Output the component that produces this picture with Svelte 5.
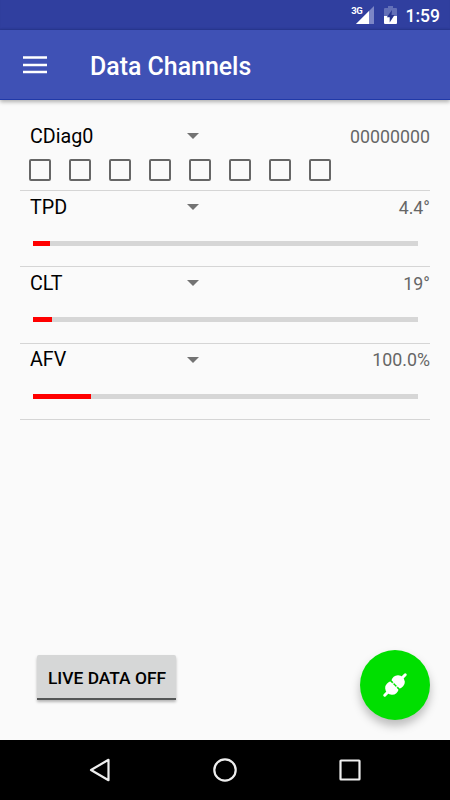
<script>
	const bits = [0, 1, 2, 3, 4, 5, 6, 7];

	const channels = [
		{ name: "CDiag0", value: "00000000", flags: true },
		{ name: "TPD", value: "4.4°", level: 4.6 },
		{ name: "CLT", value: "19°", level: 5.1 },
		{ name: "AFV", value: "100.0%", level: 15.3 },
	];
</script>

<div class="screen">
	<div class="status">
		<span class="network">3G</span>
		<svg class="signal" width="18" height="18" viewBox="0 0 18 18">
			<path d="M0 18 18 0V18Z" fill="#7c86c6" />
			<path d="M0 18 13 5V18Z" fill="#fff" />
		</svg>
		<svg class="battery" width="13" height="18" viewBox="0 0 13 18">
			<path d="M4 0H9V2H12Q13 2 13 3V10H0V3Q0 2 1 2H4Z" fill="#6370b8" />
			<path d="M0 10H13V17Q13 18 12 18H1Q0 18 0 17Z" fill="#fff" />
			<path d="M8 4 2.800 11.200H5.700V16.500L10.500 9H7.500Z" fill="#26348f" />
		</svg>
		<span class="clock">1:59</span>
	</div>

	<header>
		<svg width="24" height="18" viewBox="0 0 24 18">
			<path d="M0 1.600H24M0 8.900H24M0 16.100H24" stroke="#fff" stroke-width="2.500" />
		</svg>
		<h1>Data Channels</h1>
	</header>

	<main>
		{#each channels as channel}
			<section class:flagged={channel.flags}>
				<div class="line">
					<span class="name">{channel.name}</span>
					<svg class="caret" width="12" height="6" viewBox="0 0 12 6">
						<path d="M0 0H12L6 6Z" fill="#737373" />
					</svg>
					<span class="value">{channel.value}</span>
				</div>
				{#if channel.flags}
					<div class="flags">
						{#each bits as bit (bit)}
							<span class="box"></span>
						{/each}
					</div>
				{:else}
					<div class="track">
						<div class="fill" style="width: {channel.level}%"></div>
					</div>
				{/if}
			</section>
		{/each}
	</main>

	<div class="actions">
		<button class="toggle">LIVE DATA OFF</button>
		<button class="fab" aria-label="Connect">
			<svg width="30" height="30" viewBox="0 0 30 30">
				<g transform="translate(15 15) rotate(-45)" fill="#fff">
					<path d="M-14.500 0H14.500" stroke="#fff" stroke-width="3" stroke-linecap="round" />
					<path d="M-.600-5.800V5.800Q-2.500 6.700-4.800 6.700A6.200 6.700 0 0 1-4.800-6.700Q-2.500-6.700-.600-5.800Z" />
					<path d="M.600-5.800V5.800Q2.500 6.700 4.800 6.700A6.200 6.700 0 0 0 4.800-6.700Q2.500-6.700 .600-5.800Z" />
					<path d="M0-7V7" stroke="#00df00" stroke-width="1.300" />
					<path d="M-1-2.600H1M-1 2.600H1" stroke="#fff" stroke-width="1.300" />
				</g>
			</svg>
		</button>
	</div>

	<nav>
		<svg width="24" height="26" viewBox="0 0 24 26">
			<path d="M3 13 20.500 2.800V23.200Z" />
		</svg>
		<svg width="24" height="26" viewBox="0 0 24 26">
			<circle cx="12" cy="13" r="10.700" />
		</svg>
		<svg width="24" height="26" viewBox="0 0 24 26">
			<rect x="2.500" y="3.500" width="19" height="19" rx=".5" />
		</svg>
	</nav>
</div>

<style>
	:global(body) {
		margin: 0;
	}

	.screen {
		display: flex;
		flex-direction: column;
		width: 450px;
		height: 800px;
		overflow: hidden;
		background: #fafafa;
		color: #000;
		font-family: Roboto, sans-serif;
	}

	.status {
		display: flex;
		box-sizing: border-box;
		height: 30px;
		padding: 6px 10px 0 0;
		justify-content: flex-end;
		background: #303f9f;
		box-shadow: inset 0 -2px 2px -1px #28378f;
		color: #fff;
	}

	.network {
		margin-right: -7px;
		font-size: 9.5px;
		font-weight: 700;
		line-height: 9px;
		letter-spacing: -0.3px;
		z-index: 1;
	}

	.battery {
		margin-left: 10px;
	}

	.clock {
		margin-left: 9px;
		font-size: 17.5px;
		font-weight: 500;
		line-height: 20px;
	}

	header {
		display: flex;
		box-sizing: border-box;
		height: 70px;
		padding-left: 23px;
		align-items: center;
		background: #3f51b5;
		border-bottom: 1px solid #2039a8;
		box-shadow: 0 2px 4px rgba(0, 0, 0, 0.3);
	}

	h1 {
		margin: 4px 0 0 43px;
		color: #fff;
		font-size: 24.9px;
		font-weight: 500;
		line-height: 30px;
	}

	main {
		flex: 1;
		padding: 20px 20px 0;
	}

	section {
		box-sizing: border-box;
		height: 76.3px;
		border-bottom: 1px solid #d5d5d5;
	}

	.flagged {
		height: 71px;
	}

	.line {
		display: grid;
		grid-template-columns: 156.5px 12px 1fr;
		height: 32px;
		padding-left: 10px;
		align-items: center;
	}

	.name {
		font-size: 19.7px;
	}

	.value {
		color: #666;
		font-size: 17.8px;
		text-align: right;
	}

	.flags {
		display: flex;
		gap: 18px;
		padding: 7px 0 0 9px;
	}

	.box {
		box-sizing: border-box;
		width: 22px;
		height: 22px;
		border: 2px solid #666;
		border-radius: 2px;
	}

	.track {
		height: 5px;
		margin: 18px 12.5px 0;
		background: #d6d6d6;
	}

	.fill {
		height: 100%;
		background: #f00;
	}

	.actions {
		display: flex;
		padding: 0 20px 20px 37px;
		align-items: center;
		justify-content: space-between;
	}

	button {
		border: 0;
		padding: 0;
		font-family: inherit;
	}

	.toggle {
		width: 139px;
		height: 45px;
		margin-bottom: 15px;
		padding: 2px 0 0 1px;
		border-bottom: 2px solid #555757;
		border-radius: 2px 2px 0 0;
		background: #d6d7d7;
		box-shadow: 0 2px 3px rgba(0, 0, 0, 0.28);
		color: #000;
		font-size: 17.4px;
		font-weight: 500;
	}

	.fab {
		display: flex;
		width: 70px;
		height: 70px;
		align-items: center;
		justify-content: center;
		border-radius: 50%;
		background: #00df00;
		box-shadow: 0 6px 10px rgba(0, 0, 0, 0.25);
	}

	nav {
		display: flex;
		height: 60px;
		align-items: center;
		justify-content: center;
		gap: 101px;
		background: #000;
	}

	nav svg {
		fill: none;
		stroke: #eee;
		stroke-width: 2.2;
		stroke-linejoin: round;
	}
</style>
